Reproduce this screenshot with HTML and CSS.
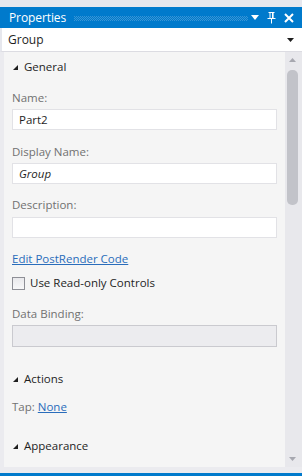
FILE: index.html
```html
<!DOCTYPE html>
<html>
<head>
<meta charset="utf-8">
<link rel="stylesheet" href="styles.css">
</head>
<body>
<div class="window">
  <div class="titlebar">
    <span class="title">Properties</span>
    <span class="grip"></span>
    <span class="tb-icons">
      <svg class="ic" width="8" height="5" viewBox="0 0 8 5"><polygon points="0,0 8,0 4,5" fill="#fff"/></svg>
      <svg class="ic" width="9" height="12" viewBox="0 0 9 12"><path d="M1.5 0.5h6M3 0.5v6M6 0.5v6M0.5 6.5h8M4.5 6.5v5" stroke="#fff" stroke-width="1" fill="none"/><rect x="5" y="1" width="1.2" height="5.5" fill="#fff"/></svg>
      <svg class="ic" width="10" height="10" viewBox="0 0 10 10"><path d="M1 1L9 9M9 1L1 9" stroke="#fff" stroke-width="2" fill="none"/></svg>
    </span>
  </div>
  <div class="combo">
    <span>Group</span>
    <svg width="7" height="4" viewBox="0 0 7 4"><polygon points="0,0 7,0 3.5,4" fill="#1e1e1e"/></svg>
  </div>
  <div class="main">
    <div class="content">
      <div class="section s-general"><span class="tri"></span>General</div>
      <div class="label l-name">Name:</div>
      <div class="input i-name">Part2</div>
      <div class="label l-disp">Display Name:</div>
      <div class="input i-disp"><em>Group</em></div>
      <div class="label l-desc">Description:</div>
      <div class="input i-desc"></div>
      <div class="link l-edit">Edit PostRender Code</div>
      <div class="check-row"><span class="box"></span>Use Read-only Controls</div>
      <div class="label l-bind">Data Binding:</div>
      <div class="input disabled"></div>
      <div class="section s-actions"><span class="tri"></span>Actions</div>
      <div class="label l-tap">Tap: <span class="link">None</span></div>
      <div class="section s-appear"><span class="tri"></span>Appearance</div>
    </div>
    <div class="scrollbar">
      <svg class="sarrow" width="7" height="4" viewBox="0 0 7 4"><polygon points="3.5,0 7,4 0,4" fill="#a7a8b0"/></svg>
      <div class="thumb"></div>
      <div class="track-rest"></div>
      <svg class="sarrow" width="7" height="4" viewBox="0 0 7 4"><polygon points="0,0 7,0 3.5,4" fill="#a7a8b0"/></svg>
    </div>
  </div>
  <div class="bottom-gap"></div>
  <div class="footer"></div>
</div>
</body>
</html>
```

FILE: styles.css
```css
html, body {
  margin: 0;
  padding: 0;
}
body {
  background: #e6e7ed;
  font-family: "Open Sans", "Noto Sans", sans-serif;
  font-size: 11.5px;
  color: #1e1e1e;
  width: 302px;
  height: 476px;
  overflow: hidden;
}
.window {
  padding-top: 7px;
  display: flex;
  flex-direction: column;
}
.titlebar {
  height: 21px;
  background: #007acc;
  display: flex;
  align-items: center;
  color: #fff;
}
.title {
  padding-left: 9px;
  font-size: 12px;
  letter-spacing: -0.1px;
}
.grip {
  flex: 1;
  height: 5px;
  margin: 1px 0 0 8px;
  background-image:
    linear-gradient(45deg, #007acc 25%, transparent 25%, transparent 75%, #007acc 75%),
    linear-gradient(45deg, #007acc 25%, transparent 25%, transparent 75%, #007acc 75%);
  background-color: #3f98d6;
  background-size: 2px 2px;
  background-position: 0 0, 1px 1px;
  opacity: 0.9;
}
.tb-icons {
  display: flex;
  align-items: center;
  gap: 8px;
  padding: 0 8px 0 3px;
}
.ic {
  display: block;
}
.combo {
  height: 23px;
  background: #fff;
  border-left: 2px solid #e6e7ed;
  border-bottom: 1px solid #dcdce2;
  display: flex;
  align-items: center;
  justify-content: space-between;
  padding: 0 8px 0 6px;
  font-size: 12px;
}
.main {
  display: flex;
  height: 415px;
  border-left: 4px solid #ebebef;
}
.content {
  flex: 1;
  background: #f5f5f5;
  padding: 0 8px 0 8px;
  display: flex;
  flex-direction: column;
}
.section {
  display: flex;
  align-items: center;
  height: 16px;
  line-height: 16px;
  color: #1e1e1e;
}
.tri {
  width: 0;
  height: 0;
  border-left: 5px solid transparent;
  border-bottom: 5px solid #1e1e1e;
  margin: 1px 6px 0 1px;
}
.label {
  height: 16px;
  line-height: 16px;
  color: #717171;
}
.input {
  height: 19px;
  line-height: 19px;
  background: #fff;
  border: 1px solid #e2e2e6;
  padding: 0 6px;
  color: #1e1e1e;
}
.input em {
  font-style: italic;
}
.disabled {
  background: #ececef;
  border-color: #cacacf;
  height: 20px;
}
.link {
  color: #2a6dbb;
  text-decoration: underline;
  height: 16px;
  line-height: 16px;
}
.check-row {
  display: flex;
  align-items: center;
  height: 16px;
  line-height: 16px;
  color: #1e1e1e;
}
.box {
  width: 11px;
  height: 11px;
  border: 1px solid #8e8f96;
  background: linear-gradient(#e9e9ec, #f8f8f9);
  margin-right: 5px;
}
.s-general { margin-top: 7px; }
.l-name { margin-top: 15px; }
.i-name { margin-top: 3px; }
.l-disp { margin-top: 14px; }
.i-disp { margin-top: 3px; }
.l-desc { margin-top: 13px; }
.i-desc { margin-top: 4px; }
.l-edit { margin-top: 13px; align-self: flex-start; }
.check-row { margin-top: 8px; }
.l-bind { margin-top: 15px; }
.disabled { margin-top: 3px; }
.s-actions { margin-top: 24px; }
.l-tap { margin-top: 12px; }
.l-tap .link { display: inline; }
.s-appear { margin-top: 23px; }
.scrollbar {
  width: 17px;
  background: #e8e8ec;
  display: flex;
  flex-direction: column;
  align-items: center;
  padding: 6px 0;
  box-sizing: border-box;
}
.sarrow {
  display: block;
  margin-left: -2px;
}
.thumb {
  width: 11px;
  height: 135px;
  margin: 8px 2px 0 0;
  border-radius: 5px;
  background: #c2c3c9;
}
.track-rest {
  flex: 1;
}
.bottom-gap {
  height: 6px;
  background: #ebebef;
}
.footer {
  height: 5px;
  background: #007acc;
}
```
